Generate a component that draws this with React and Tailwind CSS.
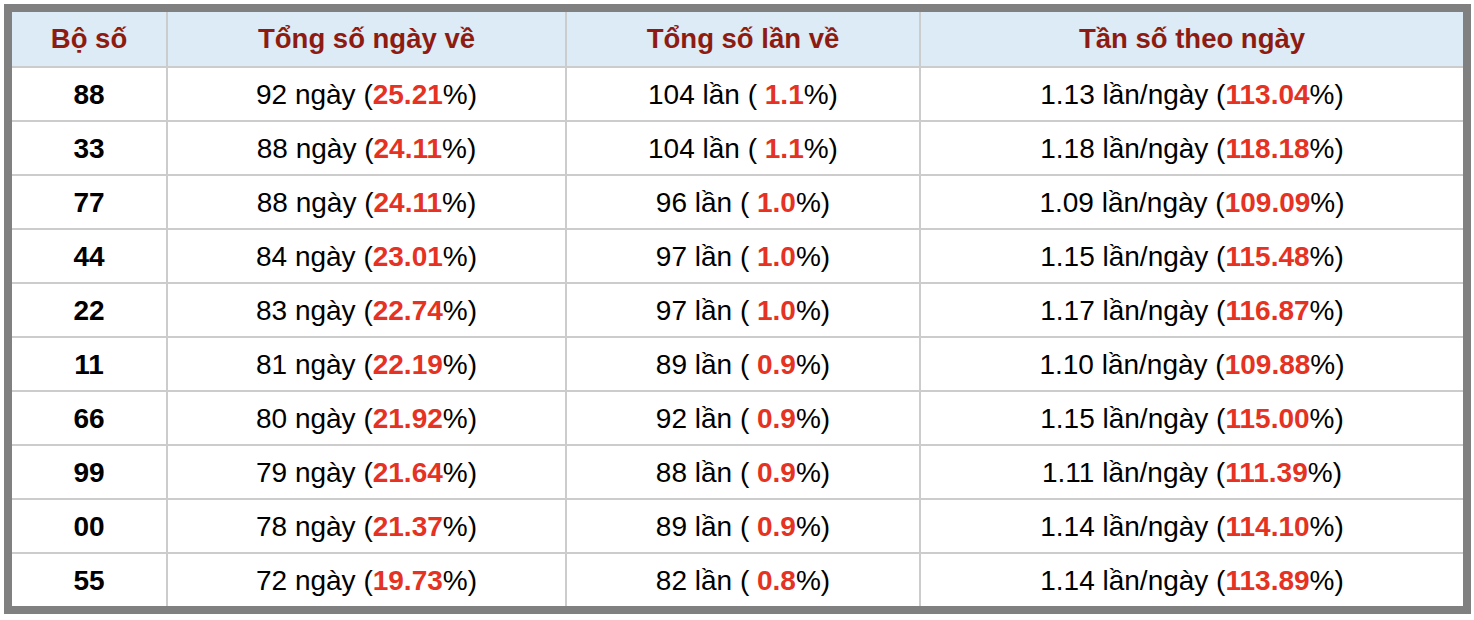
const rows = [
  ["88", "92", "25.21", "104", " 1.1", "1.13", "113.04"],
  ["33", "88", "24.11", "104", " 1.1", "1.18", "118.18"],
  ["77", "88", "24.11", "96", " 1.0", "1.09", "109.09"],
  ["44", "84", "23.01", "97", " 1.0", "1.15", "115.48"],
  ["22", "83", "22.74", "97", " 1.0", "1.17", "116.87"],
  ["11", "81", "22.19", "89", " 0.9", "1.10", "109.88"],
  ["66", "80", "21.92", "92", " 0.9", "1.15", "115.00"],
  ["99", "79", "21.64", "88", " 0.9", "1.11", "111.39"],
  ["00", "78", "21.37", "89", " 0.9", "1.14", "114.10"],
  ["55", "72", "19.73", "82", " 0.8", "1.14", "113.89"],
];

const R = ({ children }) => (
  <span className="font-bold text-[#e53222]">{children}</span>
);

export default function App() {
  const cell = "bg-white flex items-center justify-center h-[52px] text-[28px] text-black whitespace-pre pt-[1px]";
  const head = "bg-[#dcebf5] flex items-center justify-center h-[54px] text-[27.5px] font-bold text-[#8e1b12]";
  return (
    <div className="w-[1474px] h-[620px] bg-white pt-[4px] pl-[4px]" style={{ fontFamily: '"Liberation Sans", Arial, sans-serif' }}>
      <div className="w-[1467px] border-[8px] border-[#808080] bg-[#cccccc]">
        <div className="grid grid-cols-[154px_397px_352px_542px] gap-x-[2px] gap-y-[2px]">
          <div className={head}>Bộ số</div>
          <div className={head}>Tổng số ngày về</div>
          <div className={head}>Tổng số lần về</div>
          <div className={head}>Tần số theo ngày</div>
          {rows.map((r) => (
            <div key={r[0]} className="contents">
              <div className={cell + " font-bold"}>{r[0]}</div>
              <div className={cell}>
                {r[1]} ngày (<R>{r[2]}</R>%)
              </div>
              <div className={cell}>
                {r[3]} lần (<R>{r[4]}</R>%)
              </div>
              <div className={cell}>
                {r[5]} lần/ngày (<R>{r[6]}</R>%)
              </div>
            </div>
          ))}
        </div>
      </div>
    </div>
  );
}
